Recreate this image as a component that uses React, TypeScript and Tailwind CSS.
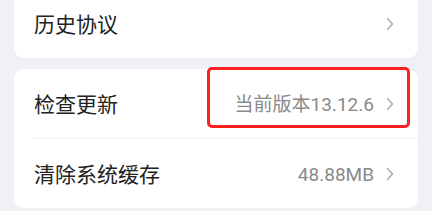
import React from "react";

function Chevron() {
  return (
    <svg width="8" height="14" viewBox="0 0 8 14" className="shrink-0" aria-hidden>
      <path
        d="M1.5 1.5 L6.5 7 L1.5 12.5"
        fill="none"
        stroke="#a8a8a8"
        strokeWidth="1.4"
        strokeLinecap="round"
        strokeLinejoin="round"
      />
    </svg>
  );
}

interface RowProps {
  label: string;
  value?: string;
  highlight?: boolean;
}

function Row({ label, value, highlight }: RowProps) {
  return (
    <div className="relative flex items-center h-[69px] pl-[20px] pr-[24px]">
      <span className="flex-1 text-[21px] text-[#222222] pt-[4px]">{label}</span>
      {value && (
        <span className="text-[19px] text-[#8a8a8a] mr-[12px] pt-[3px]">{value}</span>
      )}
      <Chevron />
      {highlight && (
        <div className="absolute left-[193px] top-[-2px] w-[203px] h-[61px] rounded-[5px] border-[3px] border-[#ff1f1f]" />
      )}
    </div>
  );
}

export default function App() {
  return (
    <div
      className="w-[432px] h-[211px] overflow-hidden bg-[#eff1f6] px-[14px]"
      style={{ fontFamily: '"Roboto", "Noto Sans CJK SC", sans-serif' }}
    >
      <div className="-mt-[11px] bg-white rounded-[10px]">
        <Row label="历史协议" />
      </div>
      <div className="mt-[11px] bg-white rounded-[10px]">
        <Row label="检查更新" value="当前版本13.12.6" highlight />
        <div className="ml-[19px] h-px bg-[#f0f0f0]" />
        <Row label="清除系统缓存" value="48.88MB" />
      </div>
    </div>
  );
}
